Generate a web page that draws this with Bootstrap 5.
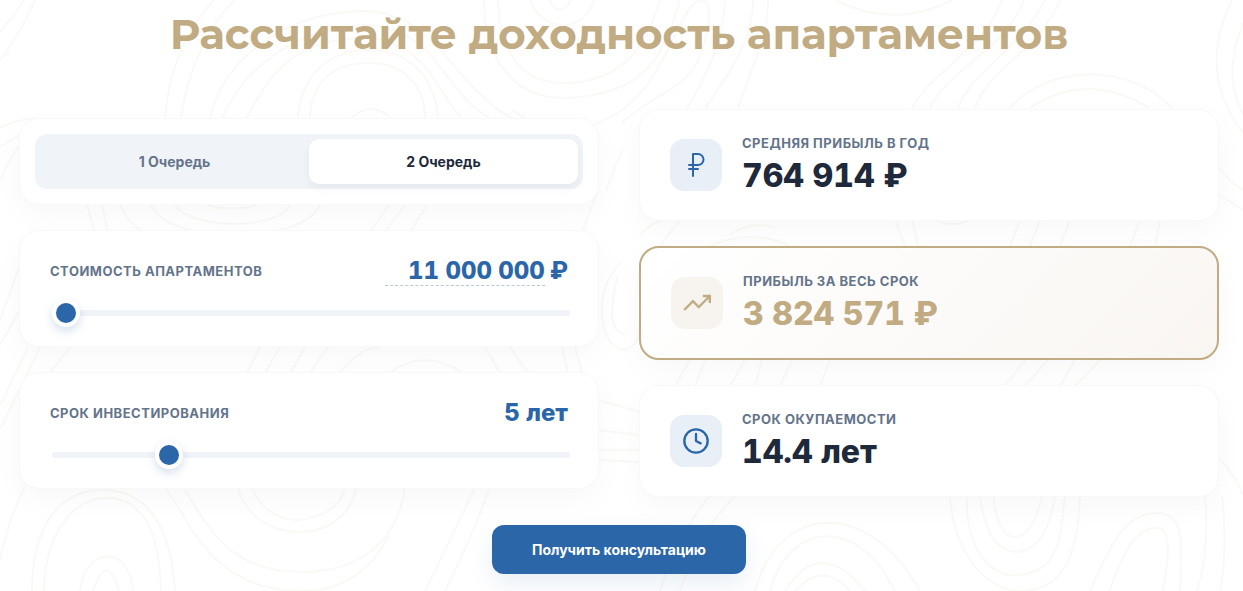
<!DOCTYPE html>
<html lang="ru">
<head>
<meta charset="utf-8">
<meta name="viewport" content="width=device-width, initial-scale=1">
<title>Калькулятор доходности</title>
<link href="https://cdn.jsdelivr.net/npm/bootstrap@5.3.0/dist/css/bootstrap.min.css" rel="stylesheet">
<style>
  :root { --blue: #2b66a9; --gold: #c1ab82; --ink: #1e293b; --slate: #64748b; --mist: #f0f4f9; }
  body { font-family: Inter, "Liberation Sans", sans-serif; color: var(--ink); background: #fff; overflow-x: hidden; }
  .calc { padding: 8px 24px 17px 19px; isolation: isolate; overflow: hidden; min-height: 100vh; }
  .contours { z-index: -1; fill: none; stroke: #fbf9f5; stroke-width: 2; }
  .calc-title { font-family: Montserrat, Inter, sans-serif; font-weight: 700; font-size: 42px; line-height: 52px; color: var(--gold); margin-bottom: 49px; }
  .calc-grid { display: grid; grid-template-columns: 1fr 1fr; gap: 40px; }
  .stack { display: flex; flex-direction: column; gap: 25px; }
  .panel { background: #fff; border: 1px solid #f8f8f9; border-radius: 20px; box-shadow: 0 10px 30px rgba(0,0,0,.03); }
  .panel-tabs { padding: 15px; }
  .tabs { background: var(--mist); border-radius: 12px; padding: 5px; }
  .tabs button { border: 0; border-radius: 10px; background: transparent; color: var(--slate); font-size: 14px; font-weight: 700; line-height: 21px; padding: 12px; }
  .tabs button.active { background: #fff; color: var(--ink); box-shadow: 0 4px 10px rgba(0,0,0,.05); }
  .panel-range { padding: 23px 30px 19px; }
  .caption { color: var(--slate); font-size: 13px; font-weight: 700; line-height: 16px; letter-spacing: .5px; text-transform: uppercase; }
  .amount { color: var(--blue); font-size: 24px; font-weight: 800; line-height: 34px; height: 34px; gap: 5px; font-variant-numeric: tabular-nums; }
  .amount input { width: 160px; height: 30px; padding: 0; border: 0; border-bottom: 1px dashed #b9c8dc; color: inherit; font: inherit; line-height: 29px; text-align: right; background: none; outline: 0; }
  .slider { -webkit-appearance: none; appearance: none; display: block; height: 6px; border-radius: 3px; background: var(--mist); margin: 22px 0 11px 2px; width: 100%; }
  .slider::-webkit-slider-thumb { -webkit-appearance: none; width: 28px; height: 28px; border-radius: 50%; border: 4px solid #fff; background: var(--blue); box-shadow: 0 4px 10px rgba(43,102,169,.2); }
  .slider::-moz-range-thumb { width: 20px; height: 20px; border-radius: 50%; border: 4px solid #fff; background: var(--blue); box-shadow: 0 4px 10px rgba(43,102,169,.2); }
  .result { display: flex; align-items: center; gap: 20px; padding: 25px 30px; }
  .result-accent { border: 2px solid var(--gold); background: linear-gradient(135deg, #fff 0%, #f9f6f2 100%); }
  .tile { flex: none; width: 52px; height: 52px; border-radius: 14px; background: #e9eff7; color: var(--blue); display: grid; place-items: center; }
  .tile svg { fill: none; stroke: currentColor; stroke-width: 2; }
  .result-accent .tile { background: #f7f4ef; color: var(--gold); }
  .figure-value { font-size: 32px; font-weight: 800; line-height: 38px; margin-top: 6px; font-variant-numeric: tabular-nums; }
  .result-accent .figure-value { color: var(--gold); }
  .btn-consult { --bs-btn-color: #fff; --bs-btn-bg: var(--blue); --bs-btn-hover-color: #fff; --bs-btn-hover-bg: #24578f; --bs-btn-border-width: 0; --bs-btn-border-radius: 12px; --bs-btn-padding-x: 40px; --bs-btn-padding-y: 14px; font-size: 14px; line-height: 21px; font-weight: 700; margin-top: 28px; box-shadow: 0 10px 25px rgba(43,102,169,.1); }
  @media (max-width: 767px) { .calc-grid { grid-template-columns: 1fr; } .calc-title { font-size: 28px; line-height: 36px; } }
</style>
</head>
<body>
<main class="calc position-relative">
  <svg class="contours position-absolute top-0 start-0 w-100 h-100" viewBox="0 0 1243 591" preserveAspectRatio="xMidYMid slice" aria-hidden="true">
    <path d="M24 0Q15 15 0 32M35 0Q22 30 0 61M165 118C169 70 185 30 214 0M181 118C187 75 205 30 234 0M210 118C220 65 280 11 367 11C440 15 450 85 512 118M223 118C240 70 300 25 367 25C440 30 440 90 490 118M246 118C265 90 280 38 367 38C430 42 440 100 462 118M298 118C300 80 325 50 369 50C415 50 436 85 438 118M310 118C311 85 330 63 369 63C407 63 425 90 425 118M351 118Q371 100 391 118"/>
    <path d="M484 0C484 55 510 98 564 98C650 96 665 50 680 0M498 0C499 50 520 83 563 83C620 83 645 50 660 0M530 0C535 15 548 25 563 25C580 25 590 12 595 0M549 0Q560 20 571 0M512 110C560 145 600 125 622 110C670 75 680 0 702 0C716 4 706 40 700 56C688 90 650 95 622 123M725 0C724 40 705 80 687 108M753 0C754 40 725 80 705 108M768 0C768 40 750 70 738 108M835 0Q895 30 952 0"/>
    <path d="M1002 0C985 50 932 70 912 108M1024 0C1005 50 947 70 930 108M1045 0C1020 50 972 70 958 108M1060 0C1040 50 987 70 975 108M1010 108C1050 63 1130 63 1172 108M1030 108Q1087 70 1149 108M1232 0C1210 45 1210 90 1243 133M1243 23Q1222 75 1243 115M1219 168Q1230 183 1243 190M1219 195L1243 210"/>
    <path d="M0 128Q15 119 40 118M0 147L20 135M0 182Q8 160 20 145M87 205L95 232M102 205L108 232M120 205Q130 225 143 232M151 205C170 246 300 246 320 205M175 205C190 230 280 230 290 205M206 205Q234 212 258 205M389 205L370 232M405 205L385 232M427 205L410 232M598 190L582 232M622 150L606 190M0 320L20 265M0 345L20 310M0 406L28 347M0 430L40 347M50 373L70 347M247 373L260 347M265 373L280 347M290 373L305 347M310 373L328 347M340 373Q360 347 380 347M390 373C410 356 440 356 462 373M485 347L500 373M510 347L528 373M562 347L568 373M575 347L582 373"/>
    <path d="M622 262C590 290 600 350 625 350Q640 346 640 320M618 275Q603 330 625 335M598 400L640 412M598 430L640 435M598 450L640 450M598 460L640 462M640 235Q655 220 665 220M680 220L660 246M710 246Q750 228 790 246M730 235Q750 220 775 228M895 220L905 246M912 220L918 246M935 220Q953 228 970 220M1010 246L1020 220M1030 246L1040 220M1060 246L1070 220M1130 246L1140 220M1155 246L1160 220M675 386L690 360M695 386L705 360M730 386L745 360M755 386L762 360M780 386L792 360M820 386L830 360M1005 386L1025 360M1025 386L1048 360M1060 386L1075 360M1075 386L1100 360M1219 458Q1235 475 1243 495"/>
    <path d="M0 560Q8 520 25 487M32 591C32 540 50 490 103 490C155 490 172 540 175 591M44 591C44 540 70 498 106 498C150 498 160 545 161 591M80 591C85 545 130 545 133 591M93 591Q107 550 119 591M165 487C190 520 210 591 302 591C350 591 380 560 390 530M183 487C210 530 230 572 302 572C370 572 400 530 405 487M238 487C245 515 270 532 298 532C330 532 350 515 357 487M252 487C260 510 280 520 298 520Q340 515 345 487M425 591Q460 520 475 487M445 591Q475 530 490 487"/>
    <path d="M660 591Q680 530 710 496M680 591Q700 530 735 496M755 591C780 500 870 500 920 591M770 591C790 518 860 518 895 591M785 591Q820 535 865 591M795 591Q823 560 850 591M950 497C955 560 990 591 1022 591C1075 590 1078 530 1080 497M967 497C965 545 990 580 1020 575C1065 570 1060 525 1065 497M980 497C985 530 995 552 1018 552C1045 548 1050 520 1055 497M994 497C995 520 1003 537 1014 537C1030 537 1037 515 1042 497M1090 591C1110 545 1125 513 1157 513C1187 513 1182 550 1180 591M1109 591C1125 550 1135 528 1157 528C1173 528 1168 560 1163 591M1205 496Q1210 550 1197 591M1222 496Q1228 550 1220 591"/>
  </svg>

  <h1 class="calc-title text-center">Рассчитайте доходность апартаментов</h1>

  <div class="calc-grid align-items-center">
    <div class="stack">
      <div class="panel panel-tabs">
        <div class="tabs d-flex">
          <button type="button" class="flex-fill w-50">1 Очередь</button>
          <button type="button" class="flex-fill w-50 active" aria-pressed="true">2 Очередь</button>
        </div>
      </div>
      <div class="panel panel-range">
        <div class="d-flex justify-content-between align-items-center">
          <label class="caption" for="price">Стоимость апартаментов</label>
          <div class="amount d-flex align-items-center"><input id="price" type="text" value="11 000 000"><span>₽</span></div>
        </div>
        <input class="slider" type="range" min="11000000" max="40000000" value="11000000" aria-label="Стоимость апартаментов">
      </div>
      <div class="panel panel-range">
        <div class="d-flex justify-content-between align-items-center">
          <label class="caption" for="term">Срок инвестирования</label>
          <output class="amount p-0" for="term">5 лет</output>
        </div>
        <input class="slider" id="term" type="range" min="1" max="20" value="5">
      </div>
    </div>

    <div class="stack">
      <div class="panel result">
        <div class="tile">
          <svg width="28" height="28" viewBox="0 0 28 28" aria-hidden="true"><path stroke-linejoin="round" stroke-linecap="round" d="M11 25V3h5a5.500 5.500 0 0 1 0 11H7M7 18h9"/></svg>
        </div>
        <div><div class="caption">Средняя прибыль в год</div><div class="figure-value">764 914 ₽</div></div>
      </div>
      <div class="panel result result-accent">
        <div class="tile">
          <svg width="28" height="28" viewBox="0 0 24 24" aria-hidden="true"><path d="M23 6l-9.500 9.500-5-5L1 18M17 6h6v6"/></svg>
        </div>
        <div><div class="caption">Прибыль за весь срок</div><div class="figure-value">3 824 571 ₽</div></div>
      </div>
      <div class="panel result">
        <div class="tile">
          <svg width="28" height="28" viewBox="0 0 24 24" aria-hidden="true"><circle cx="12" cy="12" r="10"/><path stroke-linejoin="round" stroke-linecap="round" d="M12 6v6l4 2"/></svg>
        </div>
        <div><div class="caption">Срок окупаемости</div><div class="figure-value">14.4 лет</div></div>
      </div>
    </div>
  </div>

  <div class="text-center"><button type="button" class="btn btn-consult">Получить консультацию</button></div>
</main>
<script src="https://cdn.jsdelivr.net/npm/bootstrap@5.3.0/dist/js/bootstrap.bundle.min.js"></script>
</body>
</html>
